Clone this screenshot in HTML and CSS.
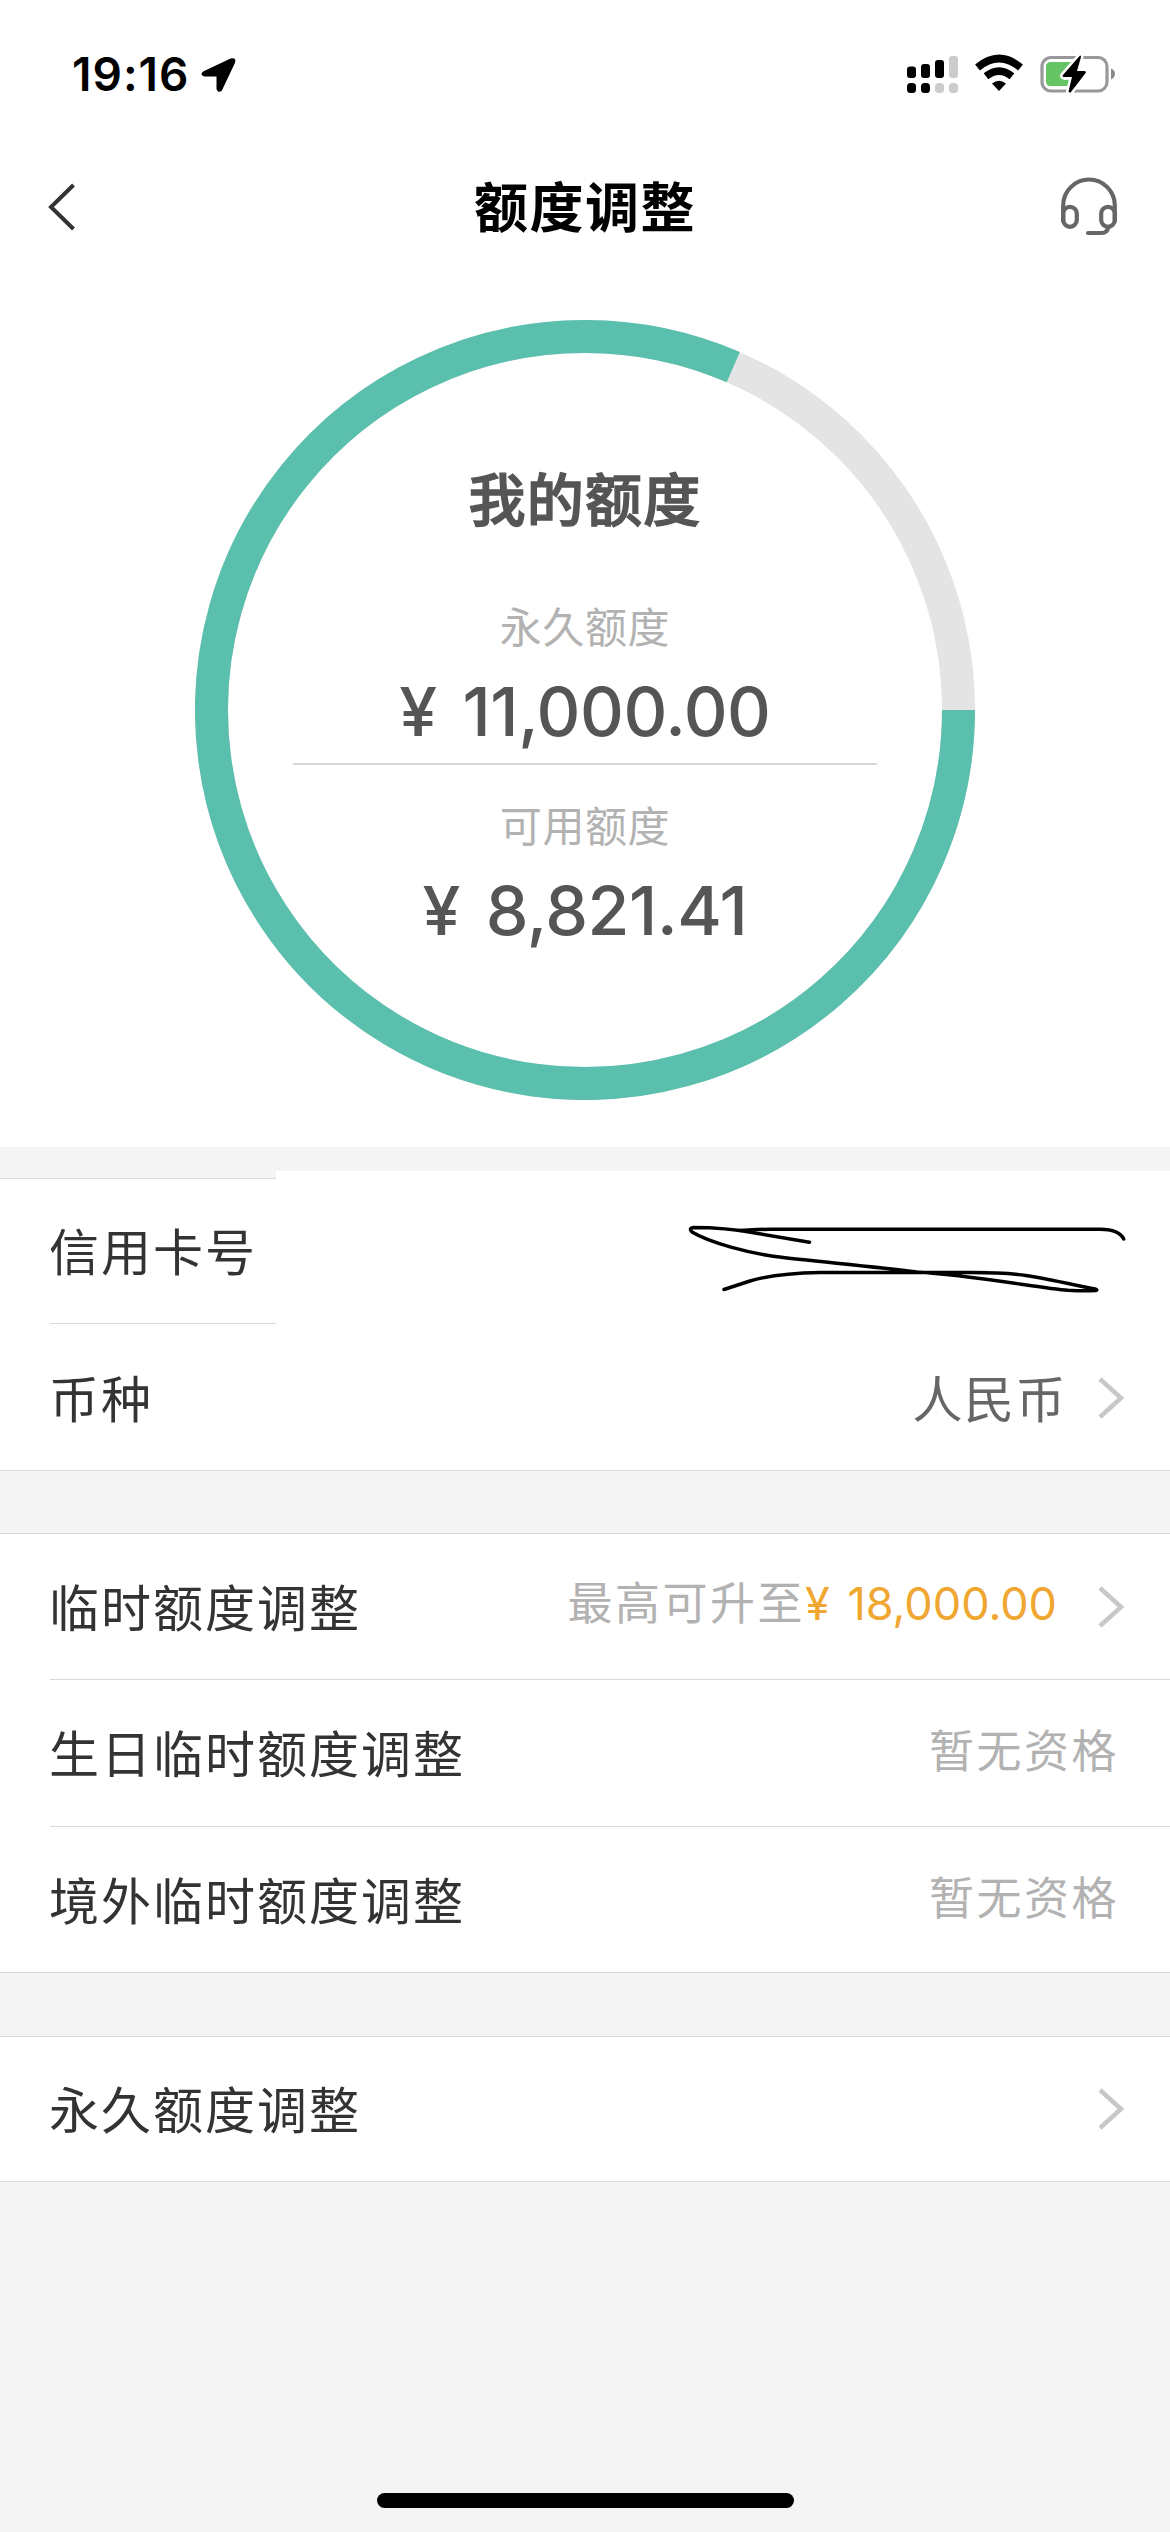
FILE: index.html
```html
<!DOCTYPE html>
<html lang="zh-CN">
<head>
<meta charset="utf-8">
<title>额度调整</title>
<link rel="stylesheet" href="styles.css">
</head>
<body>
<header class="statusbar">
  <div class="clock">
    <span class="time">19:16</span>
    <svg class="locate" width="38" height="38" viewBox="0 0 38 38"><path d="M3.500 16.500L31 3.500Q35.500 2 34 6.500L21 34Q18.500 36 17.500 33V19.500H4.500Q.8 18.500 3.500 16.500Z" fill="#000" stroke="#000" stroke-width="2" stroke-linejoin="round"/></svg>
  </div>
  <svg class="indicators" width="210" height="40" viewBox="0 0 210 40">
    <g fill="#000">
      <rect x="0" y="12.500" width="9" height="11.500" rx="3"/><rect x="14" y="10" width="9" height="14" rx="3"/><rect x="28" y="6" width="9" height="18" rx="3"/>
      <rect x="0" y="29" width="9" height="10" rx="3.500"/><rect x="14" y="29" width="9" height="10" rx="3.500"/>
    </g>
    <g fill="#ccc"><rect x="42" y="2" width="9" height="22" rx="3"/><rect x="28" y="29" width="9" height="10" rx="3.500"/><rect x="42" y="29" width="9" height="10" rx="3.500"/></g>
    <path d="M70.500 13.500Q92 -4.500 113.500 13.500" fill="none" stroke="#000" stroke-width="7.500"/>
    <path d="M79 22.300Q92 12 105 22.300" fill="none" stroke="#000" stroke-width="7.500"/>
    <path d="M85 29.500Q92 24 99 29.500L92 37Z" fill="#000"/>
    <rect x="135" y="3.500" width="65" height="33.500" rx="9" fill="none" stroke="#98989c" stroke-width="3.200"/>
    <path d="M204 14.500Q208 16 208 19.800T204 25.500Z" fill="#8a8a8e"/>
    <path d="M143.500 8H165L154 22L157 26L164 25.500L161 32H143.500Q139 32 139 27.500V12.500Q139 8 143.500 8Z" fill="#65c466"/>
    <path d="M173 1.500L155.500 21.500Q155.500 23 157 23H165L161.500 37.500Q163 39.500 164 38L179 18.500Q179 17 177.500 17H170L174 3Q174 1 173 1.500Z" fill="#000" stroke="#fff" stroke-width="5" stroke-linejoin="round" paint-order="stroke"/>
  </svg>
</header>

<nav class="navbar">
  <svg class="back" width="30" height="50" viewBox="0 0 30 50"><path d="M26.500 3L4 25L26.500 47" fill="none" stroke="#333" stroke-width="4"/></svg>
  <h1 class="title">额度调整</h1>
  <svg class="service" width="58" height="60" viewBox="0 0 58 60" fill="none" stroke="#666" stroke-width="4.200" stroke-linecap="round">
    <path d="M3.200 44V28.500A25.800 26 0 0 1 54.800 28.500V44"/>
    <rect x="3.200" y="29.800" width="13.600" height="20" rx="6.800"/>
    <rect x="41.200" y="29.800" width="13.600" height="20" rx="6.800"/>
    <path d="M48.500 50Q47 56 42 56H28"/>
  </svg>
</nav>

<section class="summary">
  <svg class="ring" width="780" height="780" viewBox="0 0 780 780">
    <g fill="none" stroke-width="33">
      <circle cx="390" cy="390" r="373.500" stroke="#e4e4e4"/>
      <path d="M763.500 390A373.500 373.500 0 1 1 538.300 47.200" stroke="#5abfad"/>
    </g>
  </svg>
  <div class="amounts">
    <h2 class="heading">我的额度</h2>
    <p class="caption">永久额度</p>
    <p class="amount total">¥ 11,000.00</p>
    <p class="caption second">可用额度</p>
    <p class="amount usable">¥ 8,821.41</p>
  </div>
</section>

<main class="groups">
  <section class="group card">
    <div class="row"><span class="label">信用卡号</span>
      <div class="redaction"><svg width="894" height="152" viewBox="276 1171 894 152" fill="none" stroke="#000" stroke-width="3.500" stroke-linecap="round" stroke-linejoin="round">
        <path d="M809.500 1242.300L755 1233Q725 1227.500 694 1227.500Q688 1228 692 1232C710 1243 750 1253 775 1256.500C810 1261 870 1266 917 1272C970 1275 1040 1288 1068 1290.300Q1085 1291.300 1096 1290.500Q1098 1290 1095 1289C1060 1282 1035 1276 1018 1274.500Q1000 1272.500 970 1272.500H820C790 1273 765 1276.500 750 1281L724 1289.500"/>
        <path d="M740 1230.500Q757 1229.300 770 1229.300H1100Q1119 1229.300 1123.700 1239"/>
      </svg></div>
    </div>
    <div class="row"><span class="label">币种</span><span class="value">人民币</span><svg class="chevron" width="28" height="44" viewBox="0 0 28 44"><path d="M3 3L24 22L3 41"/></svg></div>
  </section>
  <section class="group limits">
    <div class="row"><span class="label">临时额度调整</span><span class="hint offer">最高可升至<b class="price">¥ 18,000.00</b></span><svg class="chevron" width="28" height="44" viewBox="0 0 28 44"><path d="M3 3L24 22L3 41"/></svg></div>
    <div class="row"><span class="label">生日临时额度调整</span><span class="hint end">暂无资格</span></div>
    <div class="row"><span class="label">境外临时额度调整</span><span class="hint end">暂无资格</span></div>
  </section>
  <section class="group permanent">
    <div class="row"><span class="label">永久额度调整</span><svg class="chevron lone" width="28" height="44" viewBox="0 0 28 44"><path d="M3 3L24 22L3 41"/></svg></div>
  </section>
</main>
<footer class="home"><div class="indicator"></div></footer>
</body>
</html>
```
FILE: styles.css
```css
* { box-sizing: border-box; margin: 0; }
body {
  width: 1170px; height: 2532px; overflow: hidden;
  display: flex; flex-direction: column;
  background: #f4f4f4; color: #333;
  font-family: "Inter", "Noto Sans CJK SC", sans-serif;
}
svg { display: block; flex: none; }

.statusbar { height: 142px; padding: 54px 53px 0 72px; background: #fff; display: flex; justify-content: space-between; align-items: flex-start; }
.clock { display: flex; gap: 11px; color: #000; }
.time { width: 117px; font-size: 46px; line-height: 41px; font-weight: 600; letter-spacing: 1px; white-space: nowrap; }
.locate { margin-top: 2px; }

.navbar { height: 130px; padding: 0 52px 0 47px; background: #fff; display: grid; grid-template-columns: 70px 1fr 70px; align-items: center; }
.title { padding: 0 0 4px 5px; text-align: center; color: #000; font: 700 54px/78px "Noto Sans CJK SC", sans-serif; letter-spacing: 1.500px; }
.service { justify-self: end; }

.summary { height: 875px; padding-top: 48px; background: #fff; display: grid; justify-content: center; align-items: start; }
.ring, .amounts { grid-area: 1 / 1; }
.amounts { width: 584px; margin: 0 auto; padding-top: 136px; display: flex; flex-direction: column; text-align: center; color: #555; }
.heading { font: 500 57px/80px "Noto Sans CJK SC", sans-serif; letter-spacing: 1.300px; -webkit-text-stroke: 1.400px #555; }
.caption { margin-top: 59px; color: #b2b2b2; font: 400 42px/60px "Noto Sans CJK SC", sans-serif; letter-spacing: .6px; }
.amount { height: 82px; margin-top: 15px; font-size: 68px; line-height: 82px; font-weight: 550; letter-spacing: -.4px; word-spacing: 8px; white-space: nowrap; }
.total { height: 95px; border-bottom: 2px solid #d8d8d8; }
.caption.second { margin-top: 29px; }

.groups { display: flex; flex-direction: column; }
.group { background: #fff; border: solid #dadada; border-width: 1px 0; display: grid; }
.card { margin-top: 31px; grid-template-rows: 145px 146px; }
.limits { margin-top: 62px; grid-template-rows: 145px 147px 146px; }
.permanent { margin-top: 63px; grid-template-rows: 144px; }
.row { margin-left: 50px; padding-right: 45px; display: flex; align-items: center; }
.row + .row { border-top: 1px solid #dadada; }
.card .row + .row { border-top-color: transparent; }
.label { margin-left: -1px; padding-bottom: 4px; font: 400 50px/74px "Noto Sans CJK SC", sans-serif; letter-spacing: 2px; white-space: nowrap; }
.value { margin-left: auto; padding-bottom: 4px; color: #666; font: 400 50px/74px "Noto Sans CJK SC", sans-serif; letter-spacing: 1.500px; }
.hint { margin-left: auto; padding-bottom: 8px; color: #b2b2b2; font: 400 45px/66px "Noto Sans CJK SC", sans-serif; letter-spacing: 2.500px; white-space: nowrap; }
.offer { padding-right: 10px; }
.end { padding-right: 6px; }
.price { color: #f0a732; font-family: "Inter", sans-serif; font-weight: 400; letter-spacing: 0; word-spacing: 5px; }
.chevron { margin-left: 30px; fill: none; stroke: #c8c8c8; stroke-width: 4.500; }
.lone { margin-left: auto; }

/* opaque patch with pen strokes hiding the card number */
.card .row { position: relative; }
.redaction { position: absolute; left: 226px; top: -8px; width: 894px; height: 154px; background: #fff; }
.card .row:first-child { border-bottom: 1px solid #dadada; }

.home { margin-top: auto; height: 39px; display: flex; justify-content: center; align-items: flex-start; }
.indicator { width: 417px; height: 15px; border-radius: 8px; background: #000; }
```
